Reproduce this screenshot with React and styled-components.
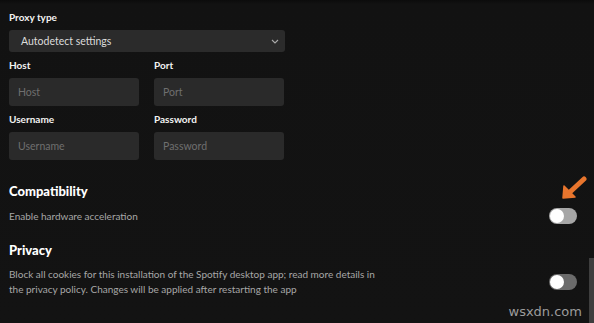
import React from 'react';
import styled, { createGlobalStyle } from 'styled-components';

const Global = createGlobalStyle`
  html, body {
    margin: 0;
    padding: 0;
    background: #121212;
  }
  body {
    font-family: Lato, "Noto Sans", sans-serif;
  }
`;

const Page = styled.div`
  position: relative;
  width: 594px;
  height: 323px;
  overflow: hidden;
  box-sizing: border-box;
  padding: 10px 17px 0 9px;
  background: linear-gradient(180deg, #0c0c0c 0px, #121212 4px, #131313 100%);
  color: #fff;
`;

const Form = styled.div`
  width: 276px;
  display: flex;
  flex-direction: column;
`;

const Label = styled.div`
  font-size: 10px;
  font-weight: 700;
  line-height: 14px;
  color: #f2f2f2;
  margin-bottom: 6px;
`;

const Select = styled.div`
  height: 22px;
  border-radius: 3px;
  background: #2b2b2b;
  display: flex;
  align-items: center;
  justify-content: space-between;
  padding: 0 6px 0 12px;
  font-size: 10.5px;
  color: #dcdcdc;
  margin-bottom: 6px;
`;

const Grid = styled.div`
  display: grid;
  grid-template-columns: 130px 130px;
  column-gap: 15px;
  margin-bottom: 6px;
`;

const Field = styled.div`
  display: flex;
  flex-direction: column;
`;

const Input = styled.div`
  height: 28px;
  box-sizing: border-box;
  border-radius: 3px;
  background: #2a2a2a;
  display: flex;
  align-items: center;
  padding-left: 9px;
  font-size: 10.5px;
  color: #6f6f6f;
`;

const Heading = styled.div`
  font-size: 13px;
  font-weight: 900;
  line-height: 18px;
  color: #fff;
  margin-top: ${p => p.$mt}px;
`;

const Row = styled.div`
  display: flex;
  align-items: center;
  justify-content: space-between;
  margin-top: 8px;
`;

const Desc = styled.div`
  font-size: 10px;
  line-height: 15px;
  color: #a7a7a7;
  max-width: ${p => p.$max || 400}px;
`;

const Track = styled.div`
  width: 28px;
  height: 16px;
  border-radius: 8px;
  background: ${p => p.$light ? '#a6a6a6' : '#6b6b6b'};
  display: flex;
  align-items: center;
  padding: 0 1px;
  box-sizing: border-box;
  flex-shrink: 0;
`;

const Knob = styled.div`
  width: 14px;
  height: 14px;
  border-radius: 50%;
  background: #fff;
`;

const Scrollbar = styled.div`
  position: absolute;
  right: 0;
  top: 258px;
  bottom: 0;
  width: 5px;
  background: #3e3e3e;
`;

const Arrow = styled.svg`
  position: absolute;
  left: 560px;
  top: 176px;
`;

const Watermark = styled.div`
  position: absolute;
  right: 12px;
  bottom: 4px;
  font-family: "DejaVu Sans", sans-serif;
  font-size: 13px;
  color: #9c9c9c;
`;

function Toggle({ light }) {
  return (
    <Track $light={light}>
      <Knob />
    </Track>
  );
}

export default function App() {
  return (
    <Page>
      <Global />
      <Form>
        <Label>Proxy type</Label>
        <Select>
          <span>Autodetect settings</span>
          <svg width="8" height="5" viewBox="0 0 8 5">
            <path d="M1 1 L4 4 L7 1" stroke="#aaa" strokeWidth="1.1" fill="none" />
          </svg>
        </Select>
        <Grid>
          <Field>
            <Label>Host</Label>
            <Input>Host</Input>
          </Field>
          <Field>
            <Label>Port</Label>
            <Input>Port</Input>
          </Field>
        </Grid>
        <Grid>
          <Field>
            <Label>Username</Label>
            <Input>Username</Input>
          </Field>
          <Field>
            <Label>Password</Label>
            <Input>Password</Input>
          </Field>
        </Grid>
      </Form>

      <Heading $mt={16}>Compatibility</Heading>
      <Row>
        <Desc>Enable hardware acceleration</Desc>
        <Toggle light />
      </Row>

      <Heading $mt={17}>Privacy</Heading>
      <Row>
        <Desc $max={372}>
          Block all cookies for this installation of the Spotify desktop app; read more details in the privacy policy. Changes will be applied after restarting the app
        </Desc>
        <Toggle />
      </Row>

      <Arrow width="28" height="26" viewBox="0 0 28 26">
        <path d="M24 3 L10 16" stroke="#e8752d" strokeWidth="5" strokeLinecap="round" />
        <path d="M3 22 L4 10 L15 21 Z" fill="#e8752d" stroke="#e8752d" strokeWidth="1.5" strokeLinejoin="round" />
      </Arrow>
      <Scrollbar />
      <Watermark>wsxdn.com</Watermark>
    </Page>
  );
}
